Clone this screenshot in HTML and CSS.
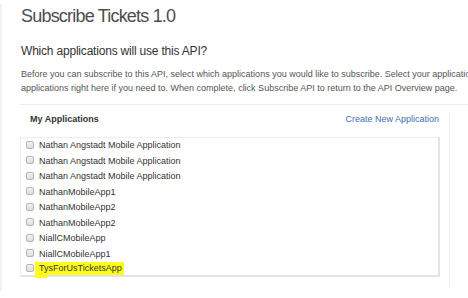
FILE: index.html
```html
<!DOCTYPE html>
<html lang="en">
<head>
  <meta charset="UTF-8">
  <title>Subscribe Tickets 1.0</title>
  <link rel="stylesheet" href="styles.css">
</head>
<body>
  <div class="page">
    <h1 class="title">Subscribe Tickets 1.0</h1>
    <h2 class="subtitle">Which applications will use this API?</h2>
    <p class="intro">
      Before you can subscribe to this API, select which applications you would like to subscribe. Select your applications from the list below or create new<br>
      applications right here if you need to. When complete, click Subscribe API to return to the API Overview page.
    </p>

    <hr class="divider">

    <!-- Applications panel -->
    <section class="panel">
      <div class="panel-head">
        <span class="panel-title">My Applications</span>
        <a href="#" class="create-link">Create New Application</a>
      </div>

      <ul class="app-list">
        <li><label><input type="checkbox"> Nathan Angstadt Mobile Application</label></li>
        <li><label><input type="checkbox"> Nathan Angstadt Mobile Application</label></li>
        <li><label><input type="checkbox"> Nathan Angstadt Mobile Application</label></li>
        <li><label><input type="checkbox"> NathanMobileApp1</label></li>
        <li><label><input type="checkbox"> NathanMobileApp2</label></li>
        <li><label><input type="checkbox"> NathanMobileApp2</label></li>
        <li><label><input type="checkbox"> NiallCMobileApp</label></li>
        <li><label><input type="checkbox"> NiallCMobileApp1</label></li>
        <li><label><input type="checkbox"> <span class="marked">TysForUsTicketsApp</span></label></li>
      </ul>
    </section>
  </div>
</body>
</html>
```

FILE: styles.css
```css
/* Reset */
* {
  margin: 0;
  padding: 0;
  box-sizing: border-box;
}

body {
  font-family: "Liberation Sans", Arial, sans-serif;
  background-color: #ffffff;
  color: #333333;
  overflow: hidden;
}

.page {
  border-left: 2px solid #f2f2f2;
  padding: 0 0 5px 18px;
}

/* Headings */
.title {
  margin: 4px 0 0 1px;
  font-size: 18px;
  line-height: 24px;
  font-weight: normal;
  letter-spacing: -0.8px;
  color: #4d4d4d;
}

.subtitle {
  margin: 15px 0 0 1px;
  font-size: 12px;
  line-height: 16px;
  font-weight: normal;
  letter-spacing: -0.2px;
  color: #333333;
}

.intro {
  margin: 8px 0 0 1px;
  font-size: 9px;
  line-height: 14px;
  color: #555555;
  white-space: nowrap;
}

.divider {
  border: none;
  border-top: 1px solid #ececec;
  margin-top: 9px;
}

/* Panel */
.panel {
  width: 430px;
  margin-top: 7px;
  padding-bottom: 9px;
  border-right: 1px solid #eeeeee;
}

.panel-head {
  display: flex;
  justify-content: space-between;
  padding: 0 10px;
  font-size: 9px;
  line-height: 14px;
}

.panel-title {
  font-weight: bold;
  color: #333333;
}

.create-link {
  color: #3f70b5;
  text-decoration: none;
}

.app-list {
  list-style: none;
  width: 420px;
  margin-top: 11px;
  border: 1px solid #eeeeee;
  border-right: 2px solid #e4e4e4;
  border-bottom: 2px solid #e4e4e4;
  font-size: 9px;
  line-height: 15.5px;
  color: #333333;
}

.app-list label {
  display: flex;
  align-items: center;
  padding-left: 5px;
}

.app-list input {
  appearance: none;
  width: 8px;
  height: 8px;
  margin: 0 5px 2px 0;
  border: 1px solid #b4b4b4;
  border-radius: 2px;
  background: linear-gradient(#f2f2f2, #dcdcdc);
}

/* Yellow marker over the last app */
.marked {
  position: relative;
  display: inline-block;
  line-height: 13px;
  margin-left: -4px;
  padding: 0 2px 0 4px;
  background-color: #ffff1a;
}

.marked::after {
  content: "";
  position: absolute;
  left: 0;
  top: 100%;
  width: 12px;
  height: 3px;
  background-color: #ffff1a;
}
```
